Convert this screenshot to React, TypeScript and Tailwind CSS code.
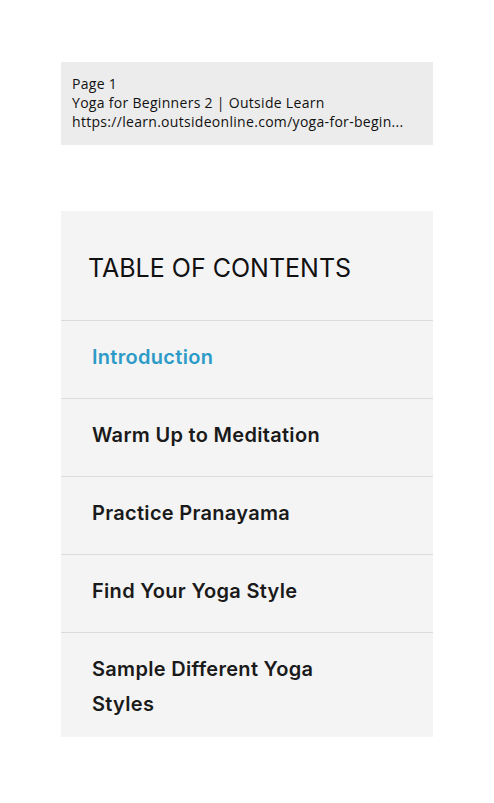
export default function App() {
  const items = [
    { label: "Introduction", active: true },
    { label: "Warm Up to Meditation" },
    { label: "Practice Pranayama" },
    { label: "Find Your Yoga Style" },
    { label: "Sample Different Yoga Styles" },
  ];

  return (
    <div className="min-h-[803px] w-[494px] bg-white pt-[62px] pl-[61px]">
      <div className="w-[372px] h-[83px] bg-[#ececec] px-[11px] pt-[12px] text-[14px] tracking-[0.3px] leading-[19px] text-[#111] font-['Open_Sans',sans-serif]">
        <div>Page 1</div>
        <div>Yoga for Beginners 2 | Outside Learn</div>
        <div className="whitespace-nowrap">https://learn.outsideonline.com/yoga-for-begin...</div>
      </div>

      <div className="mt-[66px] w-[372px] bg-[#f4f4f4] font-['Inter',sans-serif]">
        <div className="h-[110px] flex items-center px-[27px] border-b border-[#dcdcdc]">
          <h2 className="text-[25px] text-[#111] pt-[6px]">TABLE OF CONTENTS</h2>
        </div>
        {items.map((item, i) => (
          <div
            key={item.label}
            className={`px-[31px] pt-[19px] ${
              i < items.length - 1 ? "pb-[23px] border-b border-[#dcdcdc]" : "pb-[15px]"
            }`}
          >
            <div
              className={`max-w-[250px] text-[20px] tracking-[0.3px] leading-[35px] font-semibold ${
                item.active ? "text-[#2d9bc7]" : "text-[#1a1a1a]"
              }`}
            >
              {item.label}
            </div>
          </div>
        ))}
      </div>
    </div>
  );
}
